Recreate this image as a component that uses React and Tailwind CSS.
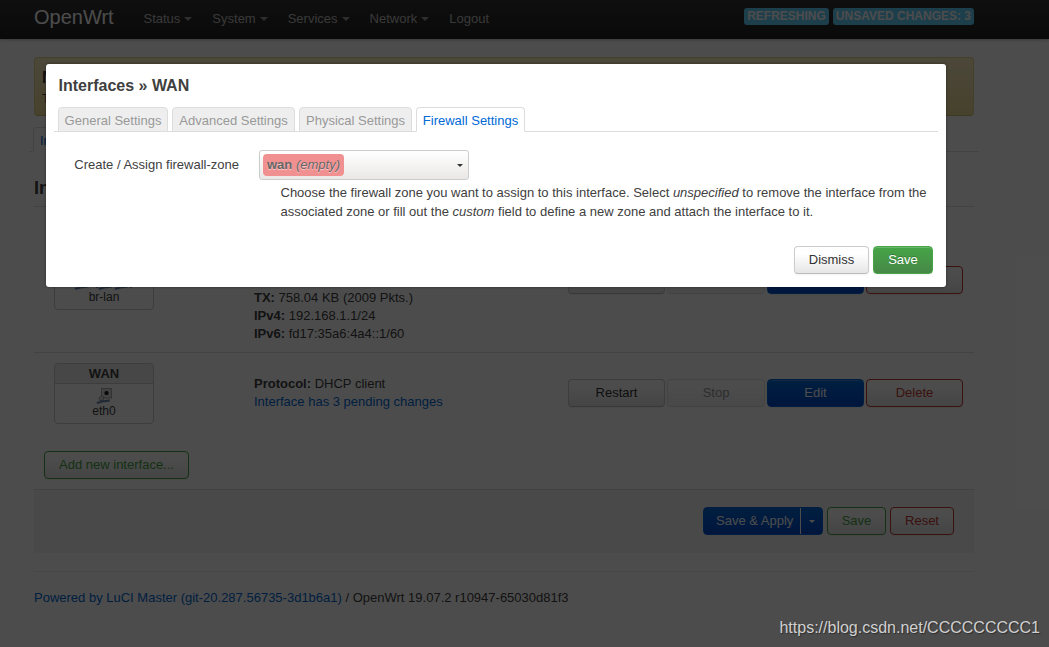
import React from "react";
import clsx from "clsx";

const menu = [
  { label: "Status", dropdown: true },
  { label: "System", dropdown: true },
  { label: "Services", dropdown: true },
  { label: "Network", dropdown: true },
  { label: "Logout" },
];

const modalTabs = [
  { label: "General Settings", width: "w-[110px]" },
  { label: "Advanced Settings", width: "w-[123px]" },
  { label: "Physical Settings", width: "w-[113px]" },
  { label: "Firewall Settings", width: "w-[109px]", active: true },
];

const buttonStyles = {
  neutral:
    "border-[#ccc] border-b-[#bbb] text-[#333] bg-[linear-gradient(#fff,#fff_25%,#e6e6e6)]",
  add: "border-[#46a546] text-[#46a546] bg-[linear-gradient(#fff,#fff_25%,#e6e6e6)]",
  danger:
    "border-[#c43c35] text-[#c43c35] bg-[linear-gradient(#fff,#fff_25%,#e6e6e6)]",
  primary:
    "border-[#0069d6] text-white bg-[linear-gradient(#0069d6,#0048cd)]",
  save: "border-[#46a546] text-white bg-[linear-gradient(#46a546,#468847)] [text-shadow:0_-1px_0_rgba(0,0,0,0.25)]",
};

const Button = ({ variant = "neutral", className, children }) => (
  <button
    className={clsx(
      "flex h-7 items-center justify-center rounded border pb-px text-[13px] leading-4 shadow-[inset_0_1px_0_rgba(255,255,255,0.2),0_1px_2px_rgba(0,0,0,0.05)]",
      buttonStyles[variant],
      className
    )}
  >
    {children}
  </button>
);

const Caret = ({ className }) => (
  <span
    className={clsx(
      "inline-block border-x-4 border-t-4 border-x-transparent",
      className
    )}
  />
);

const PortIcon = () => (
  <svg viewBox="0 0 16 16" className="h-4 w-4">
    <rect x="5.5" y="0.5" width="10" height="9.5" fill="#dcdcdc" stroke="#aaa" />
    <rect x="8.500" y="3" width="4" height="4" rx="1.500" fill="#222" />
    <path d="M3 10l2.500-2 2.500 1.500-1 2.500-3 .8z" fill="#ddd" stroke="#888" strokeWidth=".8" />
    <path d="M.8 14.5c3 .8 4-1.600 7-1.400 2 .1 3.500 0 6-.8" fill="none" stroke="#6d8bb5" strokeWidth="2.200" />
  </svg>
);

const InterfaceBadge = ({ name, device, children }) => (
  <div className="h-[61px] w-[100px] rounded border border-[#ccc] text-center shadow-[inset_0_1px_0_#fff]">
    <div className="h-5 rounded-t border-b border-[#ccc] bg-[#eee] text-[13px] font-bold leading-[19px]">
      {name}
    </div>
    <div className="flex h-5 items-end justify-center">{children}</div>
    <div className="text-xs leading-[14px]">{device}</div>
  </div>
);

const InterfaceRow = ({ name, device, icons, details, className }) => (
  <div
    className={clsx(
      "flex items-center border-b border-[#ddd] pl-5 pr-[11px]",
      className
    )}
  >
    <div className="w-[200px]">
      <InterfaceBadge name={name} device={device}>
        {icons}
      </InterfaceBadge>
    </div>
    <div className="flex-1 leading-[18px]">{details}</div>
    <div className="flex gap-[2px]">
      <Button className="w-[97px]">Restart</Button>
      <Button className="w-[98px] opacity-50">Stop</Button>
      <Button variant="primary" className="w-[97px]">
        Edit
      </Button>
      <Button variant="danger" className="w-[97px]">
        Delete
      </Button>
    </div>
  </div>
);

const Header = () => (
  <header className="relative h-[39px] bg-[linear-gradient(#333,#222)] shadow-[0_1px_3px_rgba(0,0,0,0.25),inset_0_-1px_0_rgba(0,0,0,0.1)]">
    <div className="ml-[34px] flex h-full w-[940px] items-start">
      <span className="w-[109.5px] pt-[7px] text-xl leading-5 text-white">
        OpenWrt
      </span>
      <nav className="flex flex-1 gap-5 pt-[10px] leading-[18px] text-[#bfbfbf]">
        {menu.map((item) => (
          <span key={item.label} className="flex items-center">
            {item.label}
            {item.dropdown && <Caret className="ml-1 border-t-[#999]" />}
          </span>
        ))}
      </nav>
      <div className="flex gap-1 pt-2 text-xs font-bold uppercase leading-[14px] text-white">
        <span className="rounded-[3px] bg-[#62cffc] px-[3px] pb-[2px] pt-px">
          Refreshing
        </span>
        <span className="rounded-[3px] bg-[#62cffc] px-[3px] pb-[2px] pt-px">
          Unsaved Changes: 3
        </span>
      </div>
    </div>
  </header>
);

const Modal = () => (
  <div className="absolute inset-0 bg-black/70 pl-[46px] pt-16">
    <div className="h-[223px] w-[900px] rounded-[3px] bg-white px-2 shadow-[0_0_3px_rgba(0,0,0,0.4)]">
      <h4 className="pl-[4.5px] pt-[13px] text-base font-bold leading-[18px]">
        Interfaces » WAN
      </h4>
      <ul className="mt-3 flex h-[25px] gap-1 border-b border-[#ddd] pl-1">
        {modalTabs.map((tab) => (
          <li
            key={tab.label}
            className={clsx(
              "h-[25px] rounded-t border border-[#ddd] text-center leading-[25px]",
              tab.width,
              tab.active
                ? "border-b-white bg-white text-[#0069d6]"
                : "bg-[#eee] text-[#999]"
            )}
          >
            {tab.label}
          </li>
        ))}
      </ul>
      <div className="mt-[18px] flex">
        <label className="w-[185px] pt-[6px] text-right leading-[18px]">
          Create / Assign firewall-zone
        </label>
        <div className="ml-5">
          <div className="flex h-[30px] w-[210px] items-center justify-between rounded-[3px] border border-[#ccc] bg-[linear-gradient(#fff,#e9e8e6)] pl-[3px] pr-[5px]">
            <span className="h-[22px] rounded bg-[#f09090] px-1 leading-[22px] text-[#666] [text-shadow:0_1px_1px_rgba(255,255,255,0.6)]">
              <strong>wan</strong> <em>(empty)</em>
            </span>
            <span className="border-x-[3px] border-t-[3px] border-x-transparent border-t-[#333]" />
          </div>
          <p className="ml-[21.5px] mt-[3px] w-[652px] leading-[19px]">
            Choose the firewall zone you want to assign to this interface.
            Select <em>unspecified</em> to remove the interface from the
            associated zone or fill out the <em>custom</em> field to define a
            new zone and attach the interface to it.
          </p>
        </div>
      </div>
      <div className="mt-[25px] flex justify-end gap-1 pr-[5px]">
        <Button className="w-[75px]">Dismiss</Button>
        <Button variant="save" className="w-[60px]">
          Save
        </Button>
      </div>
    </div>
  </div>
);

export default function App() {
  return (
    <div className="relative h-[647px] w-full overflow-hidden bg-white font-['Liberation_Sans',Arial,sans-serif] text-[13px] leading-[18px] text-[#404040]">
      <Header />
      <main className="ml-[34px] w-[940px] pt-[18px]">
        <div className="h-[59px] rounded border border-[#e5d48b] border-b-[#d3c06e] bg-[linear-gradient(#fceec1,#eedc94)] px-[7px] pt-[10px]">
          <h4 className="text-base font-bold leading-[20px]">
            No password set!
          </h4>
          <p className="pt-[2px]">
            There is no password set on this router. Please configure a root
            password to protect the web interface.
          </p>
        </div>
        <div className="-ml-[5px] mt-[11px] flex h-[25px] w-[950px] border-b border-[#ddd] pl-1">
          <span className="h-[25px] rounded-t border border-[#ddd] border-b-white bg-white px-[6px] leading-[25px] text-[#0069d6]">
            Interfaces
          </span>
        </div>
        <h3 className="mt-[26px] h-[29px] border-b border-[#ddd] text-lg font-bold leading-[20px]">
          Interfaces
        </h3>
        <InterfaceRow
          className="h-[146px]"
          name="LAN"
          device="br-lan"
          icons={
            <>
              <PortIcon />
              <span>&nbsp;(</span>
              <PortIcon />
              <PortIcon />
              <span>)</span>
            </>
          }
          details={
            <>
              <p><b>Protocol:</b> Static address</p>
              <p><b>Uptime:</b> 0h 12m 40s</p>
              <p><b>MAC:</b> 52:54:00:12:34:56</p>
              <p><b>RX:</b> 281.17 KB (2144 Pkts.)</p>
              <p><b>TX:</b> 758.04 KB (2009 Pkts.)</p>
              <p><b>IPv4:</b> 192.168.1.1/24</p>
              <p><b>IPv6:</b> fd17:35a6:4a4::1/60</p>
            </>
          }
        />
        <InterfaceRow
          className="h-20 border-b-0"
          name="WAN"
          device="eth0"
          icons={<PortIcon />}
          details={
            <>
              <p><b>Protocol:</b> DHCP client</p>
              <p className="text-[#0069d6]">Interface has 3 pending changes</p>
            </>
          }
        />
        <div className="flex pl-[10px] pt-[18px]">
          <Button variant="add" className="w-[145px]">
            Add new interface...
          </Button>
        </div>
        <div className="mt-[10px] flex h-[64px] justify-end gap-1 rounded-b-[3px] border-t border-[#ddd] bg-[#f5f5f5] pr-5 pt-[17px]">
          <div className="flex h-7 w-[120px] rounded border border-[#0069d6] bg-[linear-gradient(#0069d6,#0048cd)] text-white">
            <span className="flex-1 pl-3 leading-[25px]">Save &amp; Apply</span>
            <span className="flex w-[22px] items-center justify-center border-l border-white">
              <span className="border-x-[3px] border-t-[3px] border-x-transparent border-t-white" />
            </span>
          </div>
          <Button variant="add" className="w-[59px]">
            Save
          </Button>
          <Button variant="danger" className="w-16">
            Reset
          </Button>
        </div>
        <footer className="mt-[18px] border-t border-[#eee] pt-[17px]">
          <span className="text-[#0069d6]">
            Powered by LuCI Master (git-20.287.56735-3d1b6a1)
          </span>{" "}
          / OpenWrt 19.07.2 r10947-65030d81f3
        </footer>
      </main>
      <Modal />
      <span className="absolute bottom-[9px] right-[9px] text-base leading-5 text-[#d0d0d0] [text-shadow:1px_1px_1px_rgba(0,0,0,0.4)]">
        https://blog.csdn.net/CCCCCCCCC1
      </span>
    </div>
  );
}
